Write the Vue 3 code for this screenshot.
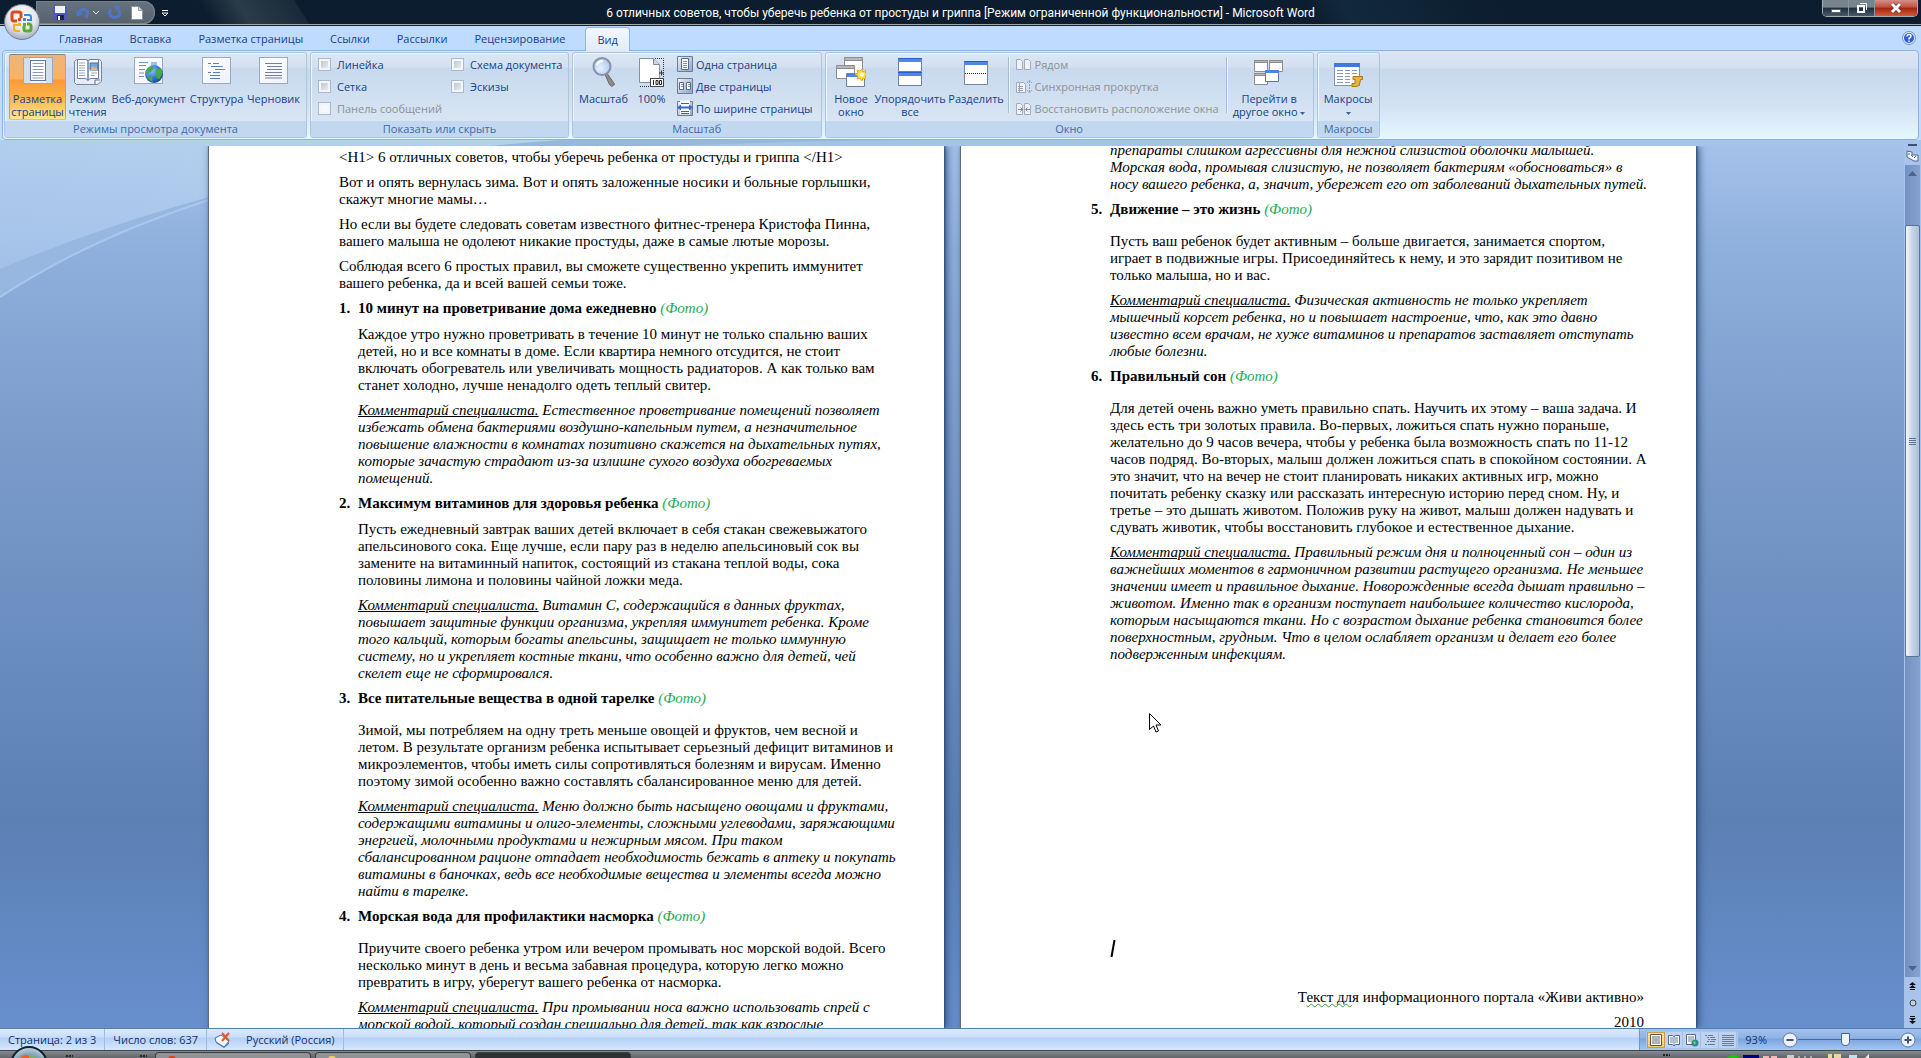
<script setup>
  import { ref } from "vue";

  const zoom = ref(93);

  const tabs = [
    "Главная", "Вставка", "Разметка страницы", "Ссылки",
    "Рассылки", "Рецензирование", "Вид",
  ];

  // 30x30 ribbon icons
  const icons = {
    layout: `<rect x="0.500" y="0.500" width="29" height="26" fill="url(#gPaper)" stroke="#9aa9c0"/><path d="M1 1h6v25H1zM23 1h6v25h-6z" fill="#d3dff0"/><rect x="7.500" y="3.500" width="15" height="20" fill="#fff" stroke="#5d76a3"/><path d="M9.500 6.500h11M9.500 9.500h11M9.500 12.500h11M9.500 15.500h11M9.500 18.500h11M9.500 21h11" stroke="#8c9cb8"/>`,
    reading: `<path d="M1.500 4.500l2-2h9q2 0 2.500 2q.5-2 2.500-2h9l2 2v20l-4 3H3.500l-2-2z" fill="#e9eef6" stroke="#7787a2"/><path d="M4.500 2.500h8q2 0 2.500 2v19q-1-2-3-2h-7.500zM25.500 2.500h-8q-2 0-2.500 2v19q1-2 3-2h7.500z" fill="#fff" stroke="#6e7e9a"/><path d="M6 6h6M6 8.500h6M6 11h6M6 13.500h6M6 16h6M6 18.500h6M18 16h6M18 18.500h4" stroke="#98a8c2"/><rect x="17" y="6" width="8" height="7" fill="#6fa8e8" stroke="#3a6cb5"/><path d="M17 13l3-4 2 2 1-1 2 3z" fill="#f2b366"/><path d="M22 27v-4h5" fill="#fff" stroke="#5b6a83"/>`,
    web: `<rect x="0.500" y="0.500" width="28" height="26" fill="url(#gPaper)" stroke="#9aa9c0"/><path d="M5 5.500h9M5 8.500h7M5 12.500h6M5 16h5M5 19.500h5" stroke="#6f8fc6"/><rect x="17" y="5" width="6" height="6" fill="#9cc0ea"/><circle cx="20" cy="17" r="9" fill="url(#gGlobe)"/><path d="M14 11q4-3 6-1l-2 4-4 3-2-2zM22 13l5-2 1.500 5-3 6-3-1zM13 19l5 1 1 5q-4-1-6-6z" fill="#49a942"/>`,
    outline: `<rect x="0.500" y="0.500" width="28" height="26" fill="url(#gPaper)" stroke="#9aa9c0"/><path d="M6 6.500h3M11 6.500h6M9 9.500h9M13 12.500h9M6 15.500h3M11 15.500h7M8 18.500h10M8 21.500h10" stroke="#5580bb"/><path d="M18 9.500h3M20 12.500h3" stroke="#808ea6"/>`,
    draft: `<rect x="0.500" y="0.500" width="28" height="26" fill="url(#gPaper)" stroke="#9aa9c0"/><path d="M6 6.500h17M8 9.500h15M8 12.500h15M6 15.500h17M6 18.500h17M6 21h17" stroke="#74819b"/>`,
    lens: `<path d="M15.500 16.500l5 11q2 3 4 1t0-3l-7-10" fill="#8f8a88" stroke="#6e6867"/><circle cx="13" cy="9.500" r="8.500" fill="url(#gLens)" stroke="#8792a7" stroke-width="2"/><path d="M8 8q1-4 6-4" stroke="#fff" stroke-width="2" fill="none"/>`,
    hundred: `<path d="M2.500 1.500h14l6 6v18h-20z" fill="#fff" stroke="#8390a8"/><path d="M16.500 1.500v6h6" fill="#cddaee" stroke="#7a88a2"/><path d="M18 1.500h8.500V25M3 29.500h11" stroke="#333" stroke-dasharray="1 1" fill="none"/><path d="M22 16h5M24.500 13.500v5" stroke="#333"/><rect x="13.500" y="21.500" width="13" height="8" fill="#fff" stroke="#444"/><path d="M16.500 23v5M19 23.500h2v4h-2zM22.500 23.500h2v4h-2z" stroke="#222" fill="none"/>`,
    newwin: `<g stroke="#8d8d90"><path d="M8.500.5h18v17h-18z" fill="#fff"/><path d="M8.500.5h18v3h-18z" fill="#b8b8bc"/><path d="M.5 8.500h18v13H.5z" fill="#fff"/><path d="M.5 8.500h18v3H.5z" fill="#b8b8bc"/></g><path d="M10.500 16.500h18v13h-18z" fill="#fff" stroke="#6d7fa0"/><path d="M11 17h17v3H11z" fill="#4c83e6"/><path d="M26 12l1 3 3-2-1 3 3 1-3 2 1 3-3-1-1 3-2-3-3 1 1-3-3-2 3-1-1-3 3 1z" fill="#ffe14a" stroke="#f3a61c"/><circle cx="26" cy="17.500" r="2" fill="#fff"/>`,
    arrange: `<path d="M3.500 1.500h23v13h-23zM3.500 15.500h23v13h-23z" fill="#fff" stroke="#6b7ea4"/><path d="M3 1h24v4H3zM3 15h24v4H3z" fill="#4f86ea"/><path d="M3 1.500h24M3 15.500h24" stroke="#2c5ec4"/>`,
    split: `<path d="M3.500 4.500h23v23h-23z" fill="#fff" stroke="#7485a8"/><path d="M3 4h24v4H3z" fill="#4f86ea"/><path d="M3 4.500h24" stroke="#2c5ec4"/><path d="M4 16.500h22" stroke="#333" stroke-dasharray="1 1"/>`,
    switchw: `<g stroke="#8d8d90" fill="#fff"><path d="M.5 3.500h13v11H.5zM15.500 3.500h13v11h-13zM.5 16.500h13v11H.5z"/><path d="M.5 3.500h13v2H.5zM15.500 3.500h13v2h-13zM.5 16.500h13v2H.5z" fill="#b8b8bc"/></g><path d="M11.500 13.500h13v11h-13z" fill="#fff" stroke="#5d76a8"/><path d="M11 13h14v3H11z" fill="#4c83e6"/>`,
    macros: `<path d="M1.500 6.500h25v22h-25z" fill="#fff" stroke="#7f92b8"/><path d="M1 6h26v4H1z" fill="#4178e2"/><path d="M4 13.500h6M12 13.500h5M19 13.500h5M4 16.500h6M12 16.500h5M19 16.500h5M4 19.500h6M12 19.500h5M4 22.500h6M12 22.500h5M4 25.500h6M12 25.500h5" stroke="#8497b8"/><path d="M20 19.500h9.500v3h-2l-1 5q-1 2-3 2h-4.500v-3h3v-4h-2z" fill="#e8b634" stroke="#a8791a"/>`,
    // 16x16
    onepage: `<path d="M.5.5h15v15H.5z" fill="url(#gSmall)" stroke="#6c7d9c"/><path d="M4.500 2.500h7v11h-7z" fill="#fff" stroke="#55688c"/><path d="M6 5.500h4M6 7.500h4M6 9.500h4M6 11.500h4" stroke="#7c8cab"/>`,
    twopages: `<path d="M.5.5h15v15H.5z" fill="url(#gSmall)" stroke="#6c7d9c"/><path d="M2.500 4.500h4v7h-4zM9.500 4.500h4v7h-4z" fill="#fff" stroke="#55688c"/><path d="M4 6.500h2M11 6.500h2M4 8.500h2M11 8.500h2" stroke="#7c8cab"/>`,
    pagewidth: `<path d="M.5 1.500h15v14H.5z" fill="url(#gSmall)" stroke="#6c7d9c"/><path d="M3 .5h10v14H3z" fill="#fff"/><path d="M4 3.500h8M4 11.500h8M4 13.500h8" stroke="#51617f"/><path d="M0 7.500l4-3v2h8v-2l4 3-4 3v-2H4v2z" fill="#3568c8"/>`,
    side: `<g fill="#eef1f7" stroke="#a3abba"><path d="M.5 3.500h4l2 2v8h-6zM8.500 3.500h4l2 2v8h-6z"/></g>`,
    sync: `<path d="M.5 4.500h7l2 2v8h-9z" fill="#eef1f7" stroke="#a3abba"/><path d="M2 8.500h5M2 10.500h5M2 12.500h5M3.500 5v9" stroke="#9aa2b3"/><path d="M13.500 3v11M11 5l2.500-3L16 5M11 12l2.500 3 2.500-3" stroke="#9aa2b3" fill="none" stroke-dasharray="2 1"/>`,
    restore: `<g fill="#eef1f7" stroke="#a3abba"><path d="M.5 3.500h4l2 2v9h-6zM8.500 3.500h4l2 2v9h-6z"/></g><path d="M2 9.500h4M4.500 7.500l2 2-2 2M14 9.500h-4M11.500 7.500l-2 2 2 2" stroke="#7e899c" fill="none"/>`,
    // status bar views, 14x14
    vPrint: `<path d="M1.500 1.500h11v11h-11z" fill="#fff" stroke="#5a5345"/><path d="M3 4h8M3 6h8M3 8h8M3 10h8" stroke="#666"/>`,
    vRead: `<path d="M1.500 2.500h4l1.500 1 1.500-1h4v9h-4L7 13l-1.500-1.500h-4z" fill="#fff" stroke="#566784"/><path d="M7 3v10M3 5h3M3 7h3M3 9h3M8 5h3M8 7h3M8 9h3" stroke="#6b7c98"/>`,
    vWeb: `<path d="M1.500 1.500h9v10h-9z" fill="#fff" stroke="#566784"/><path d="M3 4h6M3 6h6M3 8h4" stroke="#6b7c98"/><circle cx="10" cy="10" r="3.500" fill="#2f8a86"/><path d="M8 9l2-1 1 2-1 2z" fill="#6fd06a"/>`,
    vOutline: `<path d="M2 2.500h2M5 2.500h5M4 4.500h2M7 4.500h5M5 6.500h2M8 6.500h5M4 8.500h2M7 8.500h5M2 11.500h2M5 11.500h7" stroke="#6c7a92"/>`,
    vDraft: `<path d="M1 2.500h12M1 4.500h12M1 6.500h12M1 8.500h12M1 10.500h12M1 12.500h12" stroke="#6c7a92"/>`,
  };

  const viewButtons = [
    { icon: "layout", text: "Разметка\nстраницы", cls: "w57 pressed" },
    { icon: "reading", text: "Режим\nчтения", cls: "w43" },
    { icon: "web", text: "Веб-документ", cls: "w79" },
    { icon: "outline", text: "Структура", cls: "w57" },
    { icon: "draft", text: "Черновик", cls: "w57" },
  ];
  const showOptions = [
    { id: "ruler", text: "Линейка" },
    { id: "grid", text: "Сетка" },
    { id: "messages", text: "Панель сообщений", disabled: true },
    { id: "docmap", text: "Схема документа" },
    { id: "thumbs", text: "Эскизы" },
  ];
  const zoomButtons = [
    { icon: "onepage", text: "Одна страница" },
    { icon: "twopages", text: "Две страницы" },
    { icon: "pagewidth", text: "По ширине страницы" },
  ];
  const windowButtons = [
    { icon: "newwin", text: "Новое\nокно", cls: "w43" },
    { icon: "arrange", text: "Упорядочить\nвсе", cls: "w75" },
    { icon: "split", text: "Разделить", cls: "w57" },
  ];
  const sideButtons = [
    { icon: "side", text: "Рядом" },
    { icon: "sync", text: "Синхронная прокрутка" },
    { icon: "restore", text: "Восстановить расположение окна" },
  ];
  const statusViews = ["vPrint", "vRead", "vWeb", "vOutline", "vDraft"];
  const statusViewNames = ["Разметка страницы", "Режим чтения", "Веб-документ", "Структура", "Черновик"];

  const intro = [
    "<H1> 6 отличных советов, чтобы уберечь ребенка от простуды и гриппа </H1>",
    "Вот и опять вернулась зима. Вот и опять заложенные носики и больные горлышки,\nскажут многие мамы…",
    "Но если вы будете следовать советам известного фитнес-тренера Кристофа Пинна,\nвашего малыша не одолеют никакие простуды, даже в самые лютые морозы.",
    "Соблюдая всего 6 простых правил, вы сможете существенно укрепить иммунитет\nвашего ребенка, да и всей вашей семьи тоже.",
  ];

  const tips = [
    {
      n: 1,
      title: "10 минут на проветривание дома ежедневно",
      body: "Каждое утро нужно проветривать в течение 10 минут не только спальню ваших\nдетей, но и все комнаты в доме. Если квартира немного отсудится, не стоит\nвключать обогреватель или увеличивать мощность радиаторов. А как только вам\nстанет холодно, лучше ненадолго одеть теплый свитер.",
      note: "Естественное проветривание помещений позволяет\nизбежать обмена бактериями воздушно-капельным путем, а незначительное\nповышение влажности в комнатах позитивно скажется на дыхательных путях,\nкоторые зачастую страдают из-за излишне сухого воздуха обогреваемых\nпомещений.",
    },
    {
      n: 2,
      title: "Максимум витаминов для здоровья ребенка",
      body: "Пусть ежедневный завтрак ваших детей включает в себя стакан свежевыжатого\nапельсинового сока. Еще лучше, если пару раз в неделю апельсиновый сок вы\nзамените на витаминный напиток, состоящий из стакана теплой воды, сока\nполовины лимона и половины чайной ложки меда.",
      note: "Витамин С, содержащийся в данных фруктах,\nповышает защитные функции организма, укрепляя иммунитет ребенка. Кроме\nтого кальций, которым богаты апельсины, защищает не только иммунную\nсистему, но и укрепляет костные ткани, что особенно важно для детей, чей\nскелет еще не сформировался.",
    },
    {
      n: 3,
      wide: true,
      title: "Все питательные вещества в одной тарелке",
      body: "Зимой, мы потребляем на одну треть меньше овощей и фруктов, чем весной и\nлетом. В результате организм ребенка испытывает серьезный дефицит витаминов и\nмикроэлементов, чтобы иметь силы сопротивляться болезням и вирусам. Именно\nпоэтому зимой особенно важно составлять сбалансированное меню для детей.",
      note: "Меню должно быть насыщено овощами и фруктами,\nсодержащими витамины и олиго-элементы, сложными углеводами, заряжающими\nэнергией, молочными продуктами и нежирным мясом. При таком\nсбалансированном рационе отпадает необходимость бежать в аптеку и покупать\nвитамины в баночках, ведь все необходимые вещества и элементы всегда можно\nнайти в тарелке.",
    },
    {
      n: 4,
      wide: true,
      title: "Морская вода для профилактики насморка",
      body: "Приучите своего ребенка утром или вечером промывать нос морской водой. Всего\nнесколько минут в день и весьма забавная процедура, которую легко можно\nпревратить в игру, уберегут вашего ребенка от насморка.",
      note: "При промывании носа важно использовать спрей с\nморской водой, который создан специально для детей, так как взрослые",
    },
  ];

  const carried = "препараты слишком агрессивны для нежной слизистой оболочки малышей.\nМорская вода, промывая слизистую, не позволяет бактериям «обосноваться» в\nносу вашего ребенка, а, значит, убережет его от заболеваний дыхательных путей.";

  const tipsNext = [
    {
      n: 5,
      wide: true,
      title: "Движение – это жизнь",
      body: "Пусть ваш ребенок будет активным – больше двигается, занимается спортом,\nиграет в подвижные игры. Присоединяйтесь к нему, и это зарядит позитивом не\nтолько малыша, но и вас.",
      note: "Физическая активность не только укрепляет\nмышечный корсет ребенка, но и повышает настроение, что, как это давно\nизвестно всем врачам, не хуже витаминов и препаратов заставляет отступать\nлюбые болезни.",
    },
    {
      n: 6,
      wide: true,
      title: "Правильный сон",
      body: "Для детей очень важно уметь правильно спать. Научить их этому – ваша задача. И\nздесь есть три золотых правила. Во-первых, ложиться спать нужно пораньше,\nжелательно до 9 часов вечера, чтобы у ребенка была возможность спать по 11-12\nчасов подряд. Во-вторых, малыш должен ложиться спать в спокойном состоянии. А\nэто значит, что на вечер не стоит планировать никаких активных игр, можно\nпочитать ребенку сказку или рассказать интересную историю перед сном. Ну, и\nтретье – это дышать животом. Положив руку на живот, малыш должен надувать и\nсдувать животик, чтобы восстановить глубокое и естественное дыхание.",
      note: "Правильный режим дня и полноценный сон – один из\nважнейших моментов в гармоничном развитии растущего организма. Не меньшее\nзначении имеет и правильное дыхание. Новорожденные всегда дышат правильно –\nживотом. Именно так в организм поступает наибольшее количество кислорода,\nкоторым насыщаются ткани. Но с возрастом дыхание ребенка становится более\nповерхностным, грудным. Что в целом ослабляет организм и делает его более\nподверженным инфекциям.",
    },
  ];

  const pages = [
    { paragraphs: intro, tips },
    { carried, tips: tipsNext, footer: true },
  ];
</script>

<template>
  <div class="word">
    <svg class="defs" width="0" height="0" aria-hidden="true">
      <defs>
        <linearGradient id="gPaper" x1="0" y1="0" x2="1" y2="1"><stop offset="0" stop-color="#fff" /><stop offset="1" stop-color="#edf2fa" /></linearGradient>
        <linearGradient id="gSmall" x1="0" y1="0" x2="1" y2="1"><stop offset="0" stop-color="#eef3fa" /><stop offset="1" stop-color="#8fa3c4" /></linearGradient>
        <radialGradient id="gGlobe" cx="0.35" cy="0.3" r="0.8"><stop offset="0" stop-color="#8cc8ff" /><stop offset="0.6" stop-color="#2a6fd0" /><stop offset="1" stop-color="#123f8c" /></radialGradient>
        <radialGradient id="gLens" cx="0.4" cy="0.6" r="0.7"><stop offset="0" stop-color="#e6f1fd" /><stop offset="1" stop-color="#a9c4ea" /></radialGradient>
        <radialGradient id="gOrb" cx="0.5" cy="0.35" r="0.65"><stop offset="0" stop-color="#fff" /><stop offset="0.6" stop-color="#e3e6ee" /><stop offset="1" stop-color="#a3adbd" /></radialGradient>
        <radialGradient id="gStart" cx="0.5" cy="0.7" r="0.7"><stop offset="0" stop-color="#5aa0cc" /><stop offset="0.7" stop-color="#7ea3b8" /><stop offset="1" stop-color="#c9d8e2" /></radialGradient>
      </defs>
    </svg>

    <header class="titlebar">
      <button class="office" aria-label="Office">
        <svg width="38" height="38" viewBox="0 0 38 38">
          <circle cx="19" cy="19" r="17.500" fill="url(#gOrb)" stroke="#6f7d92" />
          <g fill="none" stroke-width="3">
            <path d="M18 15v-4q0-2-2-2h-5q-2 0-2 2v5q0 2 2 2h3" stroke="#dd4a1c" />
            <path d="M21 12h5q2 0 2 2v3h-4" stroke="#3f8ad8" stroke-width="2" />
            <path d="M17 28h-4q-2 0-2-2v-4h4" stroke="#f3b01d" stroke-width="2" />
            <path d="M21 23v3q0 2 2 2h3q2 0 2-2v-3q0-2-2-2h-2" stroke="#63a834" />
          </g>
          <g fill="#dd4a1c"><rect x="15" y="15" width="3" height="3" /><rect x="20" y="15" width="3" height="3" fill="#3f8ad8" /><rect x="15" y="20" width="3" height="3" fill="#f3b01d" /><rect x="20" y="20" width="3" height="3" fill="#63a834" /></g>
        </svg>
      </button>
      <div class="quick">
        <button aria-label="Сохранить">
          <svg width="14" height="14"><path d="M0 0h14v14H1l-1-1z" fill="#5358b8" /><path d="M2 0h10v7H2z" fill="#eef0fb" /><path d="M4 9h7v5H4z" fill="#1d2150" /><path d="M5 10h2v4H5z" fill="#fff" /></svg>
        </button>
        <button aria-label="Отменить">
          <svg width="14" height="14"><path d="M3 6q4-4 7-2t0 8" fill="none" stroke="#4d76c8" stroke-width="3" /><path d="M0 4l1 7 6-3z" fill="#4d76c8" /></svg>
        </button>
        <svg class="quick-arrow" width="6" height="4"><path d="M0 0l3 3 3-3" fill="none" stroke="#e3e8f0" /></svg>
        <button aria-label="Повторить">
          <svg width="14" height="14"><path d="M3 3q-3 4 0 7t8 0q2-4-1-7" fill="none" stroke="#4d76c8" stroke-width="3" /><path d="M6 0h7l-3 6z" fill="#4d76c8" /></svg>
        </button>
        <button aria-label="Создать">
          <svg width="12" height="14"><path d="M.5.500h7l4 4v9H.5z" fill="#fff" stroke="#8b93a0" /><path d="M7.500.500v4h4" fill="#cfd5df" stroke="#8b93a0" /></svg>
        </button>
      </div>
      <button class="quick-more" aria-label="Настройка">
        <svg width="8" height="8"><path d="M1 1.500h6" stroke="#fff" /><path d="M1 4h6L4 7z" fill="none" stroke="#fff" /></svg>
      </button>
      <h1 class="caption">6 отличных советов, чтобы уберечь ребенка от простуды и гриппа [Режим ограниченной функциональности] - Microsoft Word</h1>
      <div class="winbtns">
        <button aria-label="Свернуть"><svg width="12" height="12"><path d="M1.500 7.500h9v3h-9z" fill="#fff" stroke="#59636e" /></svg></button>
        <button aria-label="Восстановить"><svg width="12" height="12"><path d="M4 1.500h6.500V8" fill="none" stroke="#f4f6f8" /><path d="M2 4h6v6H2z" fill="none" stroke="#f4f6f8" stroke-width="2" /></svg></button>
        <button class="close" aria-label="Закрыть"><svg width="12" height="12"><path d="M2 2l8 8M10 2l-8 8" stroke="#4a2a28" stroke-width="4" /><path d="M2 2l8 8M10 2l-8 8" stroke="#fff" stroke-width="3" /></svg></button>
      </div>
    </header>

    <nav class="tabs">
      <button v-for="t in tabs" :key="t" :class="{ active: t === 'Вид' }">{{ t }}</button>
      <button class="help" aria-label="Справка">
        <svg width="14" height="14"><circle cx="7" cy="7" r="6.500" fill="#dfe9fb" stroke="#7795c9" /><circle cx="7" cy="7" r="5" fill="#2d5fd6" /><path d="M5 5.500q0-2 2-2t2 1.500-2 2.500v1M7 9.500v1.500" fill="none" stroke="#fff" stroke-width="1.500" /></svg>
      </button>
    </nav>

    <div class="ribbon">
      <section class="group">
        <div class="tools">
          <button v-for="b in viewButtons" :key="b.icon" class="big" :class="b.cls">
            <svg width="30" height="30" v-html="icons[b.icon]"></svg>
            <span>{{ b.text }}</span>
          </button>
        </div>
        <h2>Режимы просмотра документа</h2>
      </section>

      <section class="group show">
        <div class="tools checks">
          <div v-for="o in showOptions" :key="o.id" class="check">
            <input :id="o.id" type="checkbox" :disabled="o.disabled">
            <label :for="o.id" :class="{ off: o.disabled }">{{ o.text }}</label>
          </div>
        </div>
        <h2>Показать или скрыть</h2>
      </section>

      <section class="group">
        <div class="tools">
          <button class="big w53"><svg width="30" height="30" v-html="icons.lens"></svg><span>Масштаб</span></button>
          <button class="big w43"><svg width="30" height="30" v-html="icons.hundred"></svg><span>100%</span></button>
          <div class="stack">
            <button v-for="b in zoomButtons" :key="b.icon" class="small">
              <svg width="16" height="16" v-html="icons[b.icon]"></svg>{{ b.text }}
            </button>
          </div>
        </div>
        <h2>Масштаб</h2>
      </section>

      <section class="group">
        <div class="tools">
          <button v-for="b in windowButtons" :key="b.icon" class="big" :class="b.cls">
            <svg width="30" height="30" v-html="icons[b.icon]"></svg>
            <span>{{ b.text }}</span>
          </button>
          <i class="divider"></i>
          <div class="stack">
            <button v-for="b in sideButtons" :key="b.icon" class="small" disabled>
              <svg width="16" height="16" v-html="icons[b.icon]"></svg>{{ b.text }}
            </button>
          </div>
          <i class="divider"></i>
          <button class="big w79">
            <svg width="30" height="30" v-html="icons.switchw"></svg>
            <span>Перейти в<br>другое окно <svg width="5" height="3"><path d="M0 0h5L2.500 3z" fill="#3f5f94" /></svg></span>
          </button>
        </div>
        <h2>Окно</h2>
      </section>

      <section class="group">
        <div class="tools">
          <button class="big w53">
            <svg width="30" height="30" v-html="icons.macros"></svg>
            <span>Макросы<br><svg width="5" height="3"><path d="M0 0h5L2.500 3z" fill="#3f5f94" /></svg></span>
          </button>
        </div>
        <h2>Макросы</h2>
      </section>
    </div>

    <main class="workspace">
      <svg class="swoosh" viewBox="0 0 960 160" width="960" height="160" preserveAspectRatio="none" aria-hidden="true">
        <path d="M0 0H960Q470 0 209 60Q90 98 0 157z" fill="#97b7e1" />
        <path d="M0 0H560Q380 12 209 57Q100 87 0 129z" fill="url(#gSky)" />
        <path d="M0 157Q90 98 209 60" fill="none" stroke="#a9c7ec" stroke-width="2" />
        <defs><linearGradient id="gSky" x1="0.4" y1="0" x2="0" y2="1"><stop offset="0" stop-color="#b3d0ee" /><stop offset="1" stop-color="#a3c1e8" /></linearGradient></defs>
      </svg>

      <div class="pages">
        <article v-for="(p, i) in pages" :key="i" class="page" :class="{ next: p.carried }">
          <p v-for="text in p.paragraphs" :key="text">{{ text }}</p>
          <p v-if="p.carried" class="note">{{ p.carried }}</p>
          <section v-for="t in p.tips" :key="t.n" class="tip" :class="{ wide: t.wide }">
            <h3><span class="num">{{ t.n }}.</span>{{ t.title }} <em>(Фото)</em></h3>
            <p>{{ t.body }}</p>
            <p class="note"><u>Комментарий специалиста.</u> {{ t.note }}</p>
          </section>
          <svg v-if="p.footer" class="caret" width="6" height="17"><path d="M4.500 0L1.500 17" stroke="#000" stroke-width="2" /></svg>
          <footer v-if="p.footer">
            <p>Т<span class="wavy">екст дл</span>я информационного портала «Живи активно»</p>
            <p>2010</p>
          </footer>
        </article>
      </div>

      <aside class="scroll">
        <i class="splitter"></i>
        <svg class="ruler" width="13" height="12"><path d="M1 1l5 1v3h6v6H8L1 7z" fill="#f4f7fc" stroke="#53678e" /><path d="M3 3v2M5 5l2 2M8 8l2-2" stroke="#53678e" /></svg>
        <div class="track">
          <svg width="9" height="5"><path d="M4.500 0L9 5H0z" fill="#4a6491" /></svg>
          <div class="thumb"><i></i></div>
          <svg width="9" height="5"><path d="M0 0h9L4.500 5z" fill="#4a6491" /></svg>
        </div>
        <div class="browse">
          <svg width="7" height="8"><path d="M3.500 0L7 3H0zM3.500 3L7 6H0zM1 7h5v1H1z" fill="#111" /></svg>
          <svg width="8" height="8"><circle cx="4" cy="4" r="3" fill="#c7cdd8" stroke="#3d4048" /></svg>
          <svg width="7" height="8"><path d="M1 0h5v1H1zM3.500 5L0 2h7zM3.500 8L0 5h7z" fill="#111" /></svg>
        </div>
      </aside>

      <svg class="pointer" width="13" height="20" aria-hidden="true"><path d="M.5.500v16l4-3.500 2.500 6 2.500-1-2.500-6h5z" fill="#fff" stroke="#000" /></svg>
    </main>

    <div class="status">
      <button>Страница: 2 из 3</button>
      <button>Число слов: 637</button>
      <button class="proof" aria-label="Проверка правописания">
        <svg width="18" height="16"><path d="M1 6l6-3 8 6-5 6-8-5z" fill="#f5f8fd" stroke="#4b6ba8" /><path d="M2 10l8 5 5-5v2l-5 4-8-5z" fill="#5578b8" /><path d="M8 1l7 8M15 1l-7 8" stroke="#e8532c" stroke-width="2" /></svg>
      </button>
      <button>Русский (Россия)</button>
      <div class="status-right">
        <div class="views">
          <button v-for="(v, i) in statusViews" :key="v" :class="{ on: i === 0 }" :aria-label="statusViewNames[i]">
            <svg width="14" height="14" v-html="icons[v]"></svg>
          </button>
        </div>
        <button class="percent">{{ zoom }}%</button>
        <button class="round" aria-label="Уменьшить" @click="zoom--"><svg width="16" height="16"><circle cx="8" cy="8" r="7" fill="#eaf1fb" stroke="#5f77a0" /><path d="M4.500 8h7" stroke="#45536c" stroke-width="2" /></svg></button>
        <input v-model.number="zoom" class="slider" type="range" min="0" max="200" aria-label="Масштаб">
        <button class="round" aria-label="Увеличить" @click="zoom++"><svg width="16" height="16"><circle cx="8" cy="8" r="7" fill="#eaf1fb" stroke="#5f77a0" /><path d="M4.500 8h7M8 4.500v7" stroke="#45536c" stroke-width="2" /></svg></button>
      </div>
    </div>

    <div class="taskbar">
      <svg class="start" width="38" height="12"><circle cx="19" cy="19" r="18" fill="url(#gStart)" stroke="#10222e" stroke-width="2" /><path d="M11 11q4-4 8-1v2h-9z" fill="#e8602c" /><path d="M20 10q4 2 7 0l-1 2h-6z" fill="#7cb342" /></svg>
      <i class="grip"></i>
      <i class="grip"></i>
      <div class="tasks">
        <button aria-label="Задача 1"><i class="dot red"></i></button>
        <button aria-label="Задача 2"><i class="dot yellow"></i></button>
        <button class="current" aria-label="Задача 3"></button>
      </div>
      <div class="tray">
        <i class="grip"></i>
        <svg width="160" height="4" aria-hidden="true"><path d="M0 4q6-7 13 0z" fill="#16c60c" /><path d="M16 1h16v3H16z" fill="#000080" /><path d="M36 2h6v2h-6zM44 2h6v2h-6z" fill="#f2b8b8" /><path d="M60 1h7v3h-7z" fill="#ccc" /><path d="M71 2h2v2h-2zM77 2h2v2h-2zM83 2h2v2h-2z" fill="#aaa" /><path d="M101 0h4v4h-4zM107 0h7v4h-7z" fill="#e6d9a0" /><path d="M122 1h8v3h-8z" fill="#bde0f2" /><path d="M138 4l4-4v4z" fill="#eee" /></svg>
      </div>
    </div>
  </div>
</template>

<style>
  html, body {
    margin: 0;
    overflow: hidden;
  }
</style>

<style scoped>
  .word {
    display: flex;
    flex-direction: column;
    height: 100vh;
    overflow: hidden;
    background: #bfdbff;
    color: #15428b;
    font-family: "Open Sans", "Noto Sans", sans-serif;
    font-size: 11px;
    line-height: 13px;
  }
  .defs {
    position: absolute;
  }
  button {
    margin: 0;
    padding: 0;
    border: 0;
    background: none;
    color: inherit;
    font: inherit;
    white-space: nowrap;
  }
  h1, h2, h3, p {
    margin: 0;
    font: inherit;
  }
  svg {
    display: block;
    flex: none;
  }

  /* title bar */
  .titlebar {
    position: relative;
    z-index: 2;
    display: flex;
    flex: none;
    height: 26px;
    box-sizing: border-box;
    padding-left: 36px;
    border-bottom: 1px solid #13202c;
    background: linear-gradient(58deg, transparent 0 11%, #2b3b48 13%, #182a39 16%, transparent 16% 68%, #12293c 70%, transparent 78%), #0b1d2e;
    box-shadow: inset 0 -1px #a5a9a6;
  }
  .office {
    position: absolute;
    left: 3px;
    top: 3px;
  }
  .quick {
    display: flex;
    align-items: center;
    gap: 9px;
    height: 23px;
    margin-top: 1px;
    padding: 0 12px 0 17px;
    border-radius: 0 12px 12px 0;
    background: linear-gradient(#66727e, #56636f);
    box-shadow: inset 0 0 0 1px #77828c;
  }
  .quick-arrow {
    margin-left: -6px;
  }
  .quick-more {
    padding: 0 6px;
  }
  .caption {
    flex: 1;
    padding-right: 76px;
    color: #fff;
    font-family: Roboto, "Open Sans", sans-serif;
    font-size: 12px;
    line-height: 27px;
    text-align: center;
    white-space: nowrap;
  }
  .winbtns {
    display: flex;
    height: 16px;
    margin-right: 3px;
    border: 1px solid #a5adb3;
    border-top: 0;
    border-radius: 0 0 5px 5px;
    overflow: hidden;
  }
  .winbtns button {
    display: flex;
    align-items: center;
    justify-content: center;
    width: 26px;
    border-right: 1px solid #8c969e;
    background: linear-gradient(#77838d 45%, #1f2e3b 50%, #4a5a68);
  }
  .winbtns .close {
    width: 42px;
    border-right: 0;
    background: linear-gradient(#d39088 0, #c2503c 45%, #a12410 50%, #d45a3a);
  }

  /* tabs */
  .tabs {
    display: flex;
    flex: none;
    gap: 1px;
    height: 24px;
    padding: 0 5px 0 46px;
  }
  .tabs button {
    padding: 0 13px;
    line-height: 25px;
  }
  .tabs .active {
    position: relative;
    z-index: 1;
    margin: 1px 0 -1px 6px;
    padding: 0 11px;
    border: 1px solid #8db2e3;
    border-bottom: 0;
    border-radius: 4px 4px 0 0;
    background: linear-gradient(#f3f8ff, #e2ebf8);
    line-height: 22px;
  }
  .tabs .help {
    margin-left: auto;
    padding: 0;
  }

  /* ribbon */
  .ribbon {
    display: flex;
    flex: none;
    gap: 3px;
    height: 90px;
    box-sizing: border-box;
    margin: 0 2px;
    padding: 1px;
    border: 1px solid #8db2e3;
    border-radius: 4px;
    background: linear-gradient(#dbe6f4 0, #d3e0f1 17px, #c7d8ed 18px, #d3e2f2 55px, #e3f5fd 84px);
    box-shadow: 0 1px #cfe6f8;
  }
  .group {
    display: flex;
    flex-direction: column;
    border: 1px solid #abc5dd;
    border-radius: 3px;
    background: linear-gradient(#dde7f4 0, #d3e0f0 14px, #c8d9ee 15px, #d8e5f3 68px);
    box-shadow: inset 1px 1px #eef5fc;
  }
  .group h2 {
    height: 16px;
    border-radius: 0 0 3px 3px;
    background: #c2d8f0;
    color: #3e6aaa;
    line-height: 16px;
    text-align: center;
  }
  .tools {
    display: flex;
    flex: 1;
    padding: 0 4px;
  }
  .big {
    display: flex;
    flex-direction: column;
    align-items: center;
    box-sizing: border-box;
    margin: 1px 0;
    padding-top: 2px;
    border: 1px solid transparent;
    border-radius: 2px;
  }
  .big span {
    margin-top: 5px;
    white-space: pre;
  }
  .big span svg {
    display: inline-block;
    vertical-align: middle;
  }
  .w43 { width: 43px; }
  .w53 { width: 53px; }
  .w57 { width: 57px; }
  .w75 { width: 75px; }
  .w79 { width: 79px; }
  .pressed {
    border-color: #8e8165 #c9a45b #f0c54c;
    background: linear-gradient(#eeb47a 0, #fbb263 24px, #fb9a34 25px, #fdb24a 42px, #fee88a 64px);
  }
  .show {
    width: 257px;
  }
  .checks {
    display: grid;
    grid-template-rows: repeat(3, 22px);
    grid-auto-flow: column;
    justify-content: start;
    column-gap: 6px;
  }
  .check {
    display: flex;
    align-items: center;
    gap: 6px;
    padding-left: 3px;
    white-space: nowrap;
  }
  .check input {
    appearance: none;
    width: 13px;
    height: 13px;
    margin: 0;
    border: 1px solid #abb9cc;
    background: linear-gradient(135deg, #b5bcc8, #f3f5f8);
    box-shadow: inset 0 0 0 2px #f2f5f9;
  }
  .check input:disabled {
    background: #f7f8fa;
  }
  .off, .small:disabled {
    color: #8d9197;
  }
  .stack {
    display: flex;
    flex-direction: column;
  }
  .small {
    display: flex;
    align-items: center;
    gap: 3px;
    height: 22px;
    padding: 0 4px;
  }
  .divider {
    width: 1px;
    height: 56px;
    margin: 4px 3px 0;
    background: #9fbbdc;
    box-shadow: 1px 0 #f0f6fc;
  }

  /* document area */
  .workspace {
    position: relative;
    display: flex;
    flex: 1;
    min-height: 0;
    padding-top: 6px;
    overflow: hidden;
    background: linear-gradient(#a5c3eb 0, #8fafdc 110px, #7b9ccb 300px, #5b80b4 680px, #678fcc 880px);
  }
  .swoosh {
    position: absolute;
    left: 0;
    top: 0;
  }
  .pages {
    position: relative;
    display: flex;
    flex: 1;
    justify-content: center;
    gap: 16px;
    min-width: 0;
    overflow: hidden;
  }
  .page {
    display: flex;
    flex: 0 1 736px;
    flex-direction: column;
    box-sizing: border-box;
    min-width: 0;
    padding: 3px 52px 0 149px;
    border-left: 1px solid #5e6a7c;
    background: #fff;
    box-shadow: 1px 0 2px #2d4870, 3px 0 8px #3b5a8a;
    color: #000;
    font-family: "Liberation Serif", "Times New Roman", serif;
    font-size: 15px;
    line-height: 17px;
  }
  .page > p {
    margin: 0 0 8px -19px;
  }
  .page p, .page h3 {
    flex: none;
    white-space: pre;
  }
  .page .note {
    margin-left: 0;
    font-style: italic;
  }
  .next {
    padding-top: 0;
  }
  .next > .note {
    margin-top: -4px;
  }
  .tip {
    flex: none;
  }
  .tip h3 {
    margin: 0 0 9px -19px;
    font-weight: bold;
  }
  .wide h3 {
    margin-bottom: 15px;
  }
  .tip p {
    margin-bottom: 8px;
  }
  .num {
    display: inline-block;
    width: 19px;
  }
  .tip em {
    color: #1faa59;
    font-weight: normal;
  }
  .caret {
    margin: auto 0 32px;
  }
  footer {
    flex: none;
    text-align: right;
  }
  footer p {
    margin-bottom: 8px;
  }
  footer p:last-child {
    margin-bottom: -3px;
  }
  .wavy {
    text-decoration: underline wavy #3c9a3c 1px;
    text-decoration-skip-ink: none;
  }

  .scroll {
    display: flex;
    flex-direction: column;
    align-items: center;
    width: 17px;
    margin-top: -6px;
    background: #a9c4ec;
  }
  .splitter {
    width: 9px;
    height: 2px;
    margin: 4px 0;
    background: #3f5275;
  }
  .ruler {
    margin-bottom: 3px;
  }
  .track {
    display: flex;
    flex: 1;
    flex-direction: column;
    align-items: center;
    width: 15px;
    box-sizing: border-box;
    padding: 6px 0;
    background: linear-gradient(90deg, #7391c0, #86a3cf);
  }
  .thumb {
    display: flex;
    flex: 0 1 430px;
    align-items: center;
    justify-content: center;
    width: 13px;
    margin: 49px 0 auto;
    border: 1px solid #5c7297;
    border-radius: 2px;
    background: linear-gradient(90deg, #f4f8fc, #c6d4e6 50%, #aabfdb);
  }
  .thumb i {
    width: 7px;
    height: 7px;
    background: repeating-linear-gradient(#5d7499 0 1px, transparent 1px 2px);
  }
  .browse {
    display: flex;
    flex: none;
    flex-direction: column;
    align-items: center;
    justify-content: space-around;
    height: 51px;
  }
  .pointer {
    position: absolute;
    left: 1149px;
    top: 573px;
  }

  /* status bar */
  .status {
    display: flex;
    flex: none;
    height: 22px;
    box-sizing: border-box;
    border-top: 1px solid #567db0;
    background: linear-gradient(#dbe9fc 0, #c9defa 8px, #b3d0f7 9px, #d5e6fc 20px);
    color: #15306b;
  }
  .status > button {
    padding: 0 8px;
    border-right: 1px solid #9dbbe3;
  }
  .status .proof {
    padding: 0 6px 0 7px;
    border-right: 0;
  }
  .status-right {
    display: flex;
    align-items: center;
    margin-left: auto;
    padding: 0 5px 0 6px;
    border-left: 1px solid #6f94c8;
    background: linear-gradient(#a3c2ee, #8db2e5 9px, #7ba5df 10px, #a5c6f2);
  }
  .views {
    display: flex;
    border: 1px solid #a9c5ec;
    border-radius: 2px;
    background: #bdd3f1;
  }
  .views button {
    padding: 1px 2px;
    box-shadow: inset -1px 0 #a3bfe6;
  }
  .views .on {
    background: linear-gradient(#fde6a8, #fbc75a);
    box-shadow: inset 0 0 0 1px #c99c45;
  }
  .percent {
    padding: 0 15px 0 7px;
  }
  .slider {
    appearance: none;
    width: 102px;
    height: 14px;
    margin: 0;
    background: linear-gradient(#506a96, #506a96) center / 100% 1px no-repeat;
  }
  .slider::-webkit-slider-thumb {
    appearance: none;
    width: 9px;
    height: 13px;
    background: #eef4fc;
    border: 1px solid #4e6288;
    border-radius: 1px 1px 5px 5px;
  }

  /* taskbar */
  .taskbar {
    position: relative;
    display: flex;
    flex: none;
    height: 8px;
    box-sizing: border-box;
    padding-left: 66px;
    border-top: 1px solid #40454a;
    background: linear-gradient(#878b8f, #5f6468);
  }
  .start {
    position: absolute;
    left: 10px;
    bottom: 0;
  }
  .grip {
    width: 7px;
    height: 2px;
    margin: 4px 67px 0 0;
    background: repeating-linear-gradient(90deg, #222 0 2px, transparent 2px 3px);
  }
  .tasks {
    display: flex;
    gap: 4px;
    margin: 1px 0 0 -59px;
  }
  .tasks button {
    width: 156px;
    box-sizing: border-box;
    padding: 3px 12px 0;
    border: 1px solid #3a3f43;
    border-bottom: 0;
    border-radius: 4px 4px 0 0;
    background: #8f9396;
  }
  .tasks .current {
    background: #2e3133;
  }
  .dot {
    display: block;
    width: 8px;
    height: 3px;
    border-radius: 4px 4px 0 0;
  }
  .red { background: #d04428; }
  .yellow { background: #e8cf6e; }
  .tray {
    display: flex;
    align-items: flex-end;
    margin-left: auto;
    padding-right: 34px;
  }
  .tray .grip {
    margin: 0 57px 2px 0;
  }
</style>
